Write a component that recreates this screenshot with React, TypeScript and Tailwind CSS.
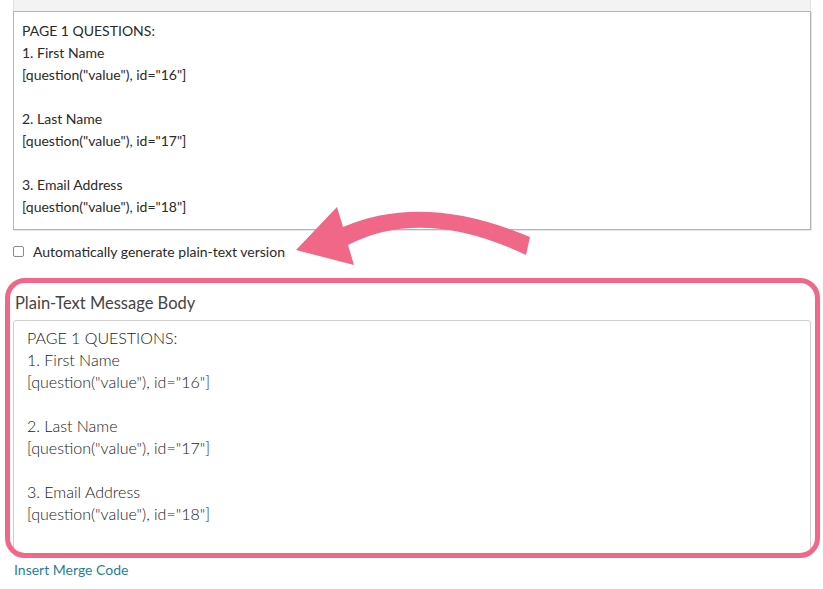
import React from "react";

const firstBody = [
  "PAGE 1 QUESTIONS:",
  "1. First Name",
  '[question("value"), id="16"]',
  "",
  "2. Last Name",
  '[question("value"), id="17"]',
  "",
  "3. Email Address",
  '[question("value"), id="18"]',
];

function Lines({ lines }: { lines: string[] }) {
  return (
    <>
      {lines.map((line, i) => (
        <div key={i} className="h-[22px] whitespace-pre">
          {line}
        </div>
      ))}
    </>
  );
}

export default function App() {
  return (
    <div className="relative w-[823px] h-[589px] bg-white overflow-hidden font-['Lato','Open_Sans',sans-serif] text-[#333]">
      <div className="pl-[13px] pr-[12px]">
        {/* toolbar remnant above the HTML editor */}
        <div className="h-[11px] bg-[#f3f3f3] border-x border-[#e2e2e2]" />

        {/* HTML message body */}
        <div className="border border-[#b5b5b5] shadow-[1px_1px_0_#e5e5e5] pt-[8px] pb-[11px] px-[8px] text-[14px] leading-[22px] text-[#2a2a2a]">
          <Lines lines={firstBody} />
        </div>

        <label className="mt-[10px] flex items-center h-[22px] text-[14px] text-[#2a2a2a]">
          <span className="w-[11px] h-[11px] rounded-[2px] border border-[#8a8a8a] bg-white mr-[9px]" />
          Automatically generate plain-text version
        </label>

        <h3 className="mt-[30px] ml-[2px] h-[22px] leading-[22px] text-[16.5px] text-[#444]">
          Plain-Text Message Body
        </h3>

        <div className="mt-[6px] border border-[#cfcfcf] rounded-[3px] pt-[6px] pb-[28px] pl-[13px] text-[16px] font-light leading-[22px] text-[#1a1a1a]">
          <Lines lines={firstBody} />
        </div>

        <a className="block mt-[5px] ml-[1px] h-[22px] leading-[22px] text-[14px] text-[#1f7f99]">
          Insert Merge Code
        </a>
      </div>

      {/* annotation: highlight box */}
      <div className="pointer-events-none absolute left-[5px] top-[278px] w-[815px] h-[280px] rounded-[20px] border-[5px] border-[#f06788]" />

      {/* annotation: curved arrow */}
      <svg
        className="pointer-events-none absolute left-0 top-0"
        width="823"
        height="589"
        viewBox="0 0 823 589"
      >
        <path
          d="M296 250 L337 207 L343 227 Q424 192 530 237 L526 255 Q423 206 348 245 L354 265 Z"
          fill="#f06788"
        />
      </svg>
    </div>
  );
}
